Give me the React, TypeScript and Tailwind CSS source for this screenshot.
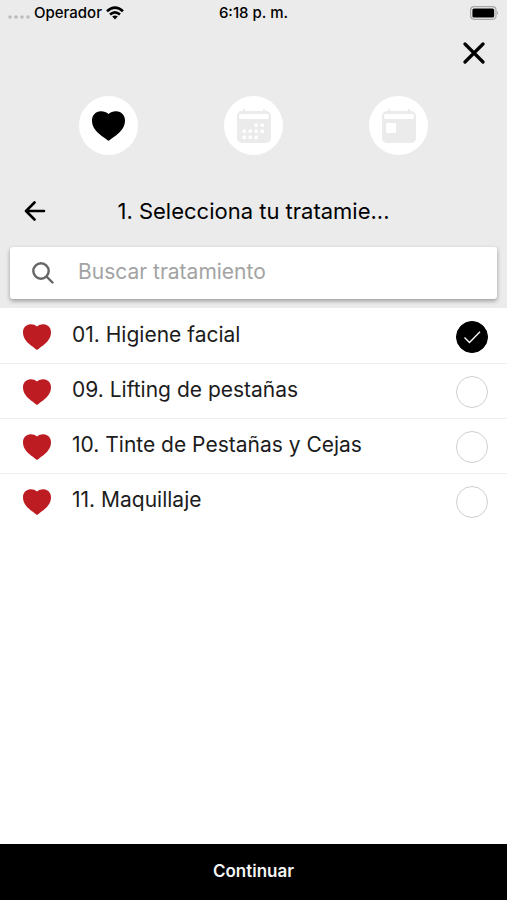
import { useState } from "react";

const treatments = [
  { id: "01", name: "Higiene facial" },
  { id: "09", name: "Lifting de pestañas" },
  { id: "10", name: "Tinte de Pestañas y Cejas" },
  { id: "11", name: "Maquillaje" },
];

function Heart({ className }: { className: string }) {
  return (
    <svg viewBox="0 0 28 26" preserveAspectRatio="none" className={className} fill="currentColor" aria-hidden="true">
      <path d="M14 2.600C12.200 0.900 9.800 0.200 7.400 0.300C3.200 0.500 0 3.600 0 8.200C0 13.200 2.600 16.600 6 19.800C8.600 22.200 11.200 23.800 13.200 25.400Q14 26 14.800 25.400C16.800 23.800 19.400 22.200 22 19.800C25.400 16.600 28 13.200 28 8.200C28 3.600 24.800 0.500 20.600 0.300C18.200 0.200 15.800 0.900 14 2.600Z" />
    </svg>
  );
}

function CalendarBase() {
  return (
    <>
      <path d="M7 0V3M27 0V3" stroke="#ebebeb" strokeWidth="2" />
      <rect x="0" y="2" width="34" height="32" rx="5" fill="#ebebeb" />
      <rect x="2" y="5" width="30" height="5" rx="2" fill="#fff" />
    </>
  );
}

function CalendarDots() {
  const dots = [
    [19, 16], [25, 16],
    [7, 22], [13, 22], [19, 22], [25, 22],
    [7, 28], [13, 28], [19, 28],
  ];
  return (
    <svg viewBox="0 0 34 34" className="size-[34px]" aria-hidden="true">
      <CalendarBase />
      {dots.map(([x, y]) => (
        <rect key={`${x}-${y}`} x={x - 1.5} y={y - 1.5} width="3.4" height="3.4" rx="1" fill="#fff" />
      ))}
    </svg>
  );
}

function CalendarDay() {
  return (
    <svg viewBox="0 0 34 34" className="size-[34px]" aria-hidden="true">
      <CalendarBase />
      <rect x="4" y="14" width="10" height="10" rx="1" fill="#fff" />
    </svg>
  );
}

function StatusBar() {
  return (
    <div className="grid h-[26px] grid-cols-3 items-center px-2 text-[15px] font-medium">
      <div className="flex items-center gap-1">
        <svg viewBox="0 0 22 4" className="mt-2 h-1 w-[22px]" fill="#bdbdbd" aria-hidden="true">
          <circle cx="2" cy="2" r="1.8" />
          <circle cx="8" cy="2" r="1.8" />
          <circle cx="14" cy="2" r="1.8" />
          <circle cx="20" cy="2" r="1.8" />
        </svg>
        <span>Operador</span>
        <svg viewBox="0 0 18 14" className="h-[14px] w-[18px]" fill="none" stroke="#000" strokeWidth="2.6" aria-hidden="true">
          <path d="M1 5.2Q9-2 17 5.2M4 8.6Q9 4.2 14 8.6" />
          <path d="M6.2 10.6Q9 8.4 11.8 10.6L9 13.4Z" fill="#000" stroke="none" />
        </svg>
      </div>
      <span className="text-center">6:18 p. m.</span>
      <svg viewBox="0 0 29 14" className="h-[14px] w-[29px] justify-self-end" aria-hidden="true">
        <rect x="0.6" y="0.7" width="25.4" height="12.6" rx="3.5" fill="none" stroke="#a8a8a8" strokeWidth="1.2" />
        <rect x="2.4" y="2.4" width="21.8" height="9.2" rx="1.6" fill="#000" />
        <path d="M27 5Q29 7 27 9Z" fill="#a8a8a8" />
      </svg>
    </div>
  );
}

export default function App() {
  const [selected, setSelected] = useState<string[]>(["01"]);
  const toggle = (id: string) =>
    setSelected((cur) => (cur.includes(id) ? cur.filter((x) => x !== id) : [...cur, id]));

  return (
    <div className="flex min-h-screen flex-col bg-white font-['Inter',sans-serif] text-black">
      <header className="bg-[#ebebeb] pb-[9px]">
        <StatusBar />
        <div className="flex justify-end px-[22px] pt-4">
          <button aria-label="Cerrar" className="flex size-[22px] items-center justify-center">
            <svg viewBox="0 0 22 22" className="size-[22px]" fill="none" stroke="#000" strokeWidth="3.2" strokeLinecap="round" aria-hidden="true">
              <path d="M2 2L20 20M20 2L2 20" />
            </svg>
          </button>
        </div>
        <nav aria-label="Pasos" className="flex justify-between px-[79px] pt-8">
          <button aria-label="Tratamiento" aria-current="step" className="flex size-[59px] items-center justify-center rounded-full bg-white">
            <Heart className="h-[30px] w-[33px]" />
          </button>
          <button aria-label="Fecha" className="flex size-[59px] items-center justify-center rounded-full bg-white">
            <CalendarDots />
          </button>
          <button aria-label="Hora" className="flex size-[59px] items-center justify-center rounded-full bg-white">
            <CalendarDay />
          </button>
        </nav>
        <div className="grid h-[92px] grid-cols-[24px_1fr_24px] items-center px-6 pt-5">
          <button aria-label="Volver" className="h-5 w-[22px]">
            <svg viewBox="0 0 22 20" className="h-5 w-[22px]" fill="none" stroke="#000" strokeWidth="2.6" strokeLinecap="round" strokeLinejoin="round" aria-hidden="true">
              <path d="M20 10H2M10.500 1.500L2 10L10.500 18.500" />
            </svg>
          </button>
          <h1 className="truncate text-center text-[22px] leading-7">1. Selecciona tu tratamie...</h1>
        </div>
        <label className="mx-[10px] flex h-[52px] items-center gap-6 rounded-[3px] bg-white px-[22px] shadow-[0_2px_4px_rgba(0,0,0,0.35)]">
          <svg viewBox="0 0 22 22" className="size-[22px] shrink-0" fill="none" stroke="#666" strokeWidth="2.4" strokeLinecap="round" aria-hidden="true">
            <circle cx="9" cy="9" r="7.700" />
            <path d="M14.600 14.600L20.500 20.500" />
          </svg>
          <input
            type="search"
            aria-label="Buscar tratamiento"
            placeholder="Buscar tratamiento"
            className="w-full bg-transparent pb-0.5 text-[21px] leading-7 outline-none placeholder:text-[#a3a3a3]"
          />
        </label>
      </header>

      <ul className="flex-1 pt-px">
        {treatments.map(({ id, name }) => (
          <li key={id} className="border-b border-[#efefef] last:border-b-0">
            <label className="flex h-[54px] items-center pl-[23px] pr-[19px] pt-px">
              <Heart className="h-[26px] w-7 text-[#bd1c22]" />
              <span className="ml-[21px] flex-1 pb-1 text-[21px] leading-7 text-[#1c1c1c]">
                {id}. {name}
              </span>
              <span className="relative flex size-8">
                <input
                  type="checkbox"
                  checked={selected.includes(id)}
                  onChange={() => toggle(id)}
                  className="peer size-8 appearance-none rounded-full border border-[#cfcfcf] bg-white checked:border-black checked:bg-black"
                />
                <svg viewBox="0 0 32 32" className="pointer-events-none absolute inset-0 hidden size-8 peer-checked:block" fill="none" stroke="#fff" strokeWidth="1.3" aria-hidden="true">
                  <path d="M8.500 16.500L13.500 21.500L24 10.800" />
                </svg>
              </span>
            </label>
          </li>
        ))}
      </ul>

      <button className="h-14 w-full bg-black text-[17px] font-semibold text-[#f5f5f5]">Continuar</button>
    </div>
  );
}
